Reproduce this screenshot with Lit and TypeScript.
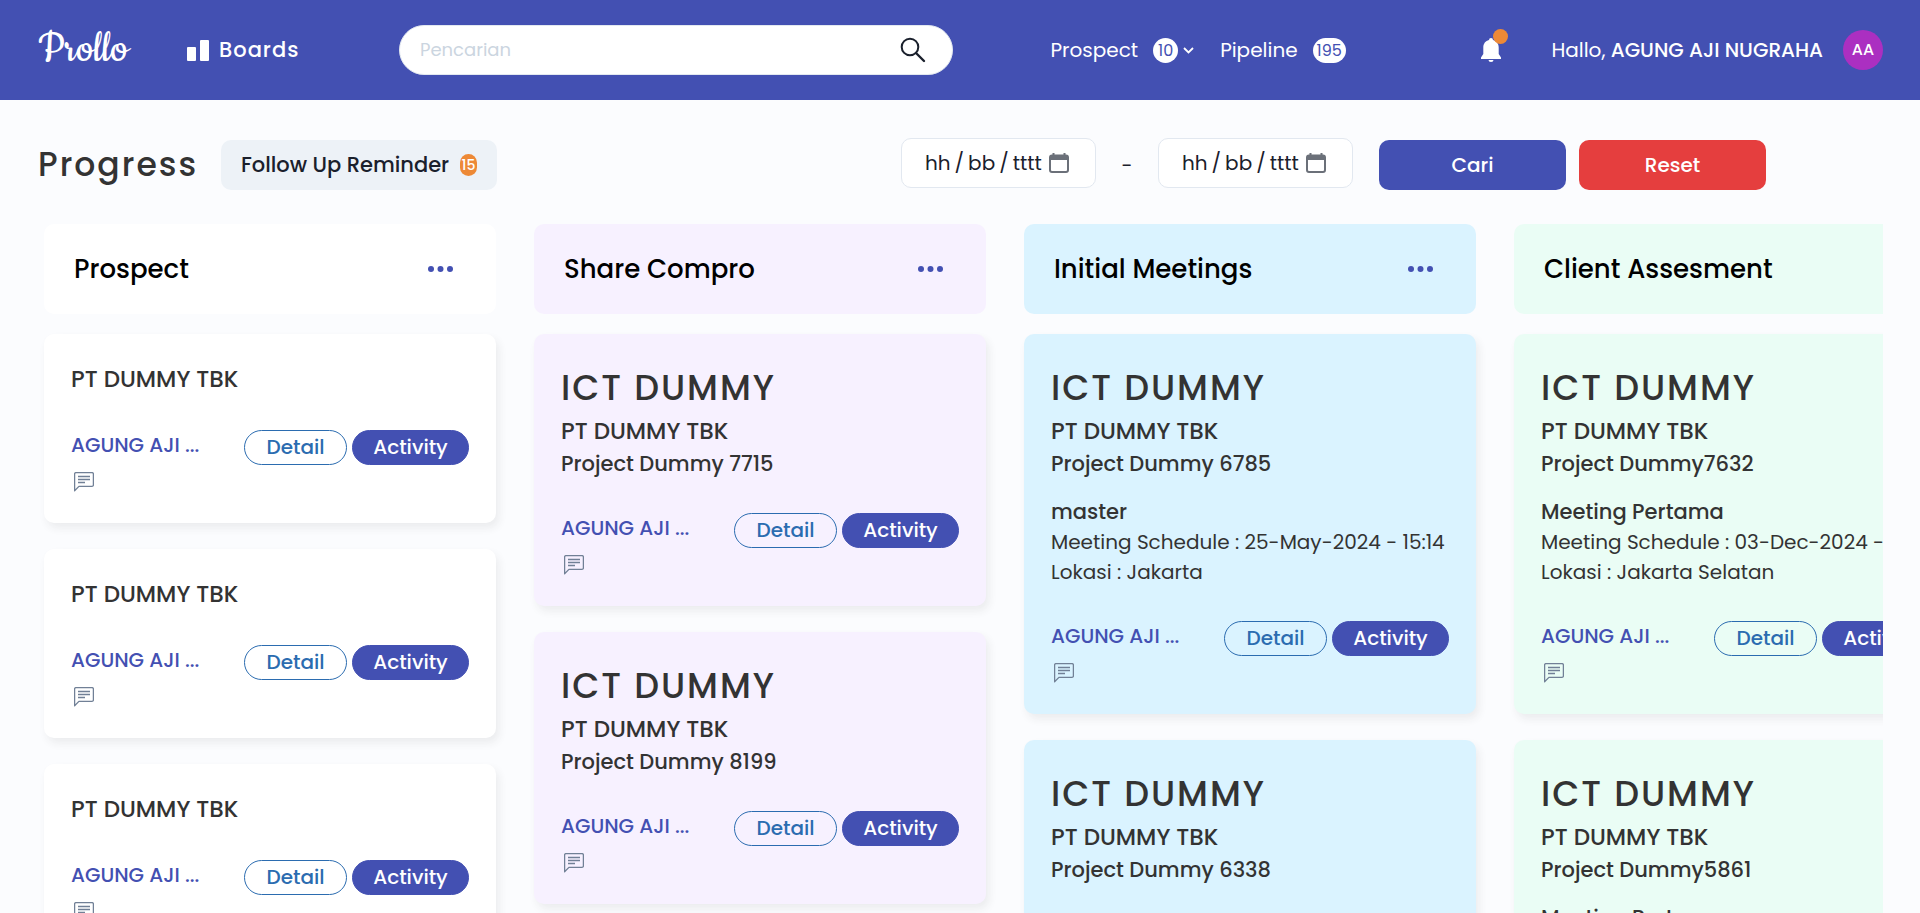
import { LitElement, html, svg, css, nothing } from "lit";
import { customElement, property } from "lit/decorators.js";

interface Meeting {
  title: string;
  schedule: string;
  location: string;
}

interface Deal {
  product?: string;
  company: string;
  project?: string;
  meeting?: Meeting;
  owner: string;
}

interface Stage {
  name: string;
  tone: string;
  deals: Deal[];
}

const owner = "AGUNG AJI ...";
const company = "PT DUMMY TBK";
const product = "ICT DUMMY";

const stages: Stage[] = [
  {
    name: "Prospect",
    tone: "white",
    deals: [
      { company, owner },
      { company, owner },
      { company, owner },
    ],
  },
  {
    name: "Share Compro",
    tone: "violet",
    deals: [
      { product, company, project: "Project Dummy 7715", owner },
      { product, company, project: "Project Dummy 8199", owner },
    ],
  },
  {
    name: "Initial Meetings",
    tone: "sky",
    deals: [
      {
        product,
        company,
        project: "Project Dummy 6785",
        meeting: { title: "master", schedule: "25-May-2024 - 15:14", location: "Jakarta" },
        owner,
      },
      { product, company, project: "Project Dummy 6338", owner },
    ],
  },
  {
    name: "Client Assesment",
    tone: "mint",
    deals: [
      {
        product,
        company,
        project: "Project Dummy7632",
        meeting: { title: "Meeting Pertama", schedule: "03-Dec-2024 -", location: "Jakarta Selatan" },
        owner,
      },
      {
        product,
        company,
        project: "Project Dummy5861",
        meeting: { title: "Meeting Pertama", schedule: "03-Dec-2024 -", location: "Jakarta Selatan" },
        owner,
      },
    ],
  },
];

const base = css`
  *,
  *::before,
  *::after {
    box-sizing: border-box;
  }
  h1,
  h2,
  h3,
  p {
    margin: 0;
    font-weight: 500;
  }
  button,
  input {
    margin: 0;
    padding: 0;
    border: 0;
    background: none;
    color: inherit;
    font: inherit;
  }
  button {
    cursor: pointer;
  }
  a {
    color: inherit;
    text-decoration: none;
  }
  svg {
    display: block;
    flex: none;
  }
`;

@customElement("app-header")
export class AppHeader extends LitElement {
  static styles = [
    base,
    css`
      :host {
        display: block;
        flex: none;
      }
      .bar {
        display: flex;
        align-items: center;
        height: 100px;
        padding: 0 37px 0 38px;
        background: #4350b2;
        color: #fff;
        font-size: 20px;
      }
      .start {
        display: flex;
        align-items: center;
        flex: 0 1 361px;
        gap: 57px;
      }
      .logo {
        width: 92px;
        font: 400 48px/52px Cookie, "Grand Hotel", Niconne, "Dancing Script", cursive;
      }
      .boards {
        display: flex;
        align-items: center;
        gap: 10px;
        font-size: 21px;
        font-weight: 500;
        letter-spacing: 1px;
      }
      .search {
        display: flex;
        align-items: center;
        flex: 0 1 30%;
        height: 50px;
        padding: 0 19px 0 20px;
        border: 1px solid #e2e8f0;
        border-radius: 25px;
        background: #fff;
        color: #1a202c;
      }
      .query {
        flex: 1;
        min-width: 0;
        font-size: 18px;
        outline: none;
      }
      .query::placeholder {
        color: #cbd5e0;
        opacity: 1;
      }
      .find {
        padding: 4px;
      }
      .links {
        display: flex;
        gap: 26px;
        margin-left: 98px;
      }
      .link {
        display: flex;
        align-items: center;
      }
      .count {
        min-width: 25px;
        height: 25px;
        margin-left: 15px;
        padding: 0 4px;
        border-radius: 13px;
        background: #fff;
        color: #4350b2;
        font-size: 16px;
        line-height: 25px;
        text-align: center;
      }
      .chevron {
        margin-left: 5px;
      }
      .account {
        display: flex;
        align-items: center;
        margin-left: auto;
      }
      .bell {
        position: relative;
        margin-right: 50px;
      }
      .dot {
        position: absolute;
        top: -9px;
        right: -7px;
        width: 15px;
        height: 15px;
        border-radius: 50%;
        background: #ed8936;
      }
      .name {
        font-weight: 500;
      }
      .avatar {
        width: 40px;
        height: 40px;
        margin-left: 20px;
        border-radius: 50%;
        background: #ab2fc1;
        font-size: 16px;
        font-weight: 500;
      }
    `,
  ];

  render() {
    return html`
      <header class="bar">
        <div class="start">
          <a class="logo" href="#">Prollo</a>
          <a class="boards" href="#boards">
            <svg width="22" height="21" viewBox="0 0 22 21" fill="currentColor" aria-hidden="true">
              <rect x="0" y="7" width="9" height="14" rx="1" />
              <rect x="13" y="0" width="9" height="21" rx="1" />
            </svg>
            Boards
          </a>
        </div>
        <form class="search" role="search">
          <input class="query" type="text" placeholder="Pencarian" aria-label="Pencarian" />
          <button class="find" type="button" aria-label="Cari">
            <svg width="32" height="32" viewBox="0 0 32 32" fill="none" stroke="currentColor" stroke-width="2" stroke-linecap="round" aria-hidden="true">
              <circle cx="13" cy="13" r="8.3" />
              <path d="M19 19l8 8" stroke-width="2.4" />
            </svg>
          </button>
        </form>
        <nav class="links">
          <a class="link" href="#prospect">
            Prospect<span class="count">10</span>
            <svg class="chevron" width="11" height="7" viewBox="0 0 11 7" fill="none" stroke="currentColor" stroke-width="1.8" aria-hidden="true">
              <path d="M1 1l4.5 4.5L10 1" />
            </svg>
          </a>
          <a class="link" href="#pipeline">Pipeline<span class="count">195</span></a>
        </nav>
        <div class="account">
          <button class="bell" type="button" aria-label="Notifikasi">
            <svg width="20" height="24" viewBox="0 0 20 24" fill="currentColor" aria-hidden="true">
              <path d="M10 0a2 2 0 0 0-2 2C4.500 2.900 2.300 5.600 2.300 9.500V16L0 19.500V21H20V19.500L17.700 16V9.500C17.700 5.600 15.500 2.900 12 2a2 2 0 0 0-2-2z" />
              <path d="M7.500 22h5a2.500 2 0 0 1-5 0z" />
            </svg>
            <span class="dot"></span>
          </button>
          <span>Hallo, <span class="name">AGUNG AJI NUGRAHA</span></span>
          <button class="avatar" type="button">AA</button>
        </div>
      </header>
    `;
  }
}

@customElement("filter-bar")
export class FilterBar extends LitElement {
  static styles = [
    base,
    css`
      :host {
        display: block;
        flex: none;
      }
      .row {
        display: flex;
        align-items: center;
        padding: 38px 154px 32px 38px;
        font-size: 20px;
      }
      .title {
        color: #333;
        font-size: 33px;
        line-height: 48px;
        letter-spacing: 2px;
      }
      .lead {
        display: flex;
        align-items: center;
        flex: 0 0 459px;
      }
      .reminder {
        display: flex;
        align-items: center;
        justify-content: space-between;
        width: 276px;
        height: 50px;
        margin-left: auto;
        padding: 0 20px;
        border-radius: 10px;
        background: #edf2f7;
        font-size: 21px;
        font-weight: 500;
      }
      .badge {
        width: 17px;
        height: 22px;
        border-radius: 9px;
        background: #ed8936;
        color: #fff;
        font-size: 14px;
        line-height: 22px;
        font-weight: 500;
        text-align: center;
      }
      .filters {
        display: flex;
        align-items: center;
        margin-left: auto;
      }
      .field {
        display: flex;
        align-items: center;
        width: 195px;
        height: 50px;
        margin-bottom: 4px;
        padding: 0 26px 0 23px;
        border: 1px solid #e2e8f0;
        border-radius: 10px;
        background: #fff;
      }
      .date {
        flex: 1;
        min-width: 0;
        outline: none;
      }
      .date::placeholder {
        color: #1a202c;
        opacity: 1;
      }
      .calendar {
        color: #6b7079;
      }
      .dash {
        width: 62px;
        text-align: center;
      }
      .action {
        width: 187px;
        height: 50px;
        margin-left: 13px;
        border-radius: 10px;
        color: #fff;
        font-weight: 500;
      }
      .apply {
        margin-left: 26px;
        background: #4350b2;
      }
      .reset {
        background: #e53e3e;
      }
    `,
  ];

  private dateField(label: string) {
    return html`
      <label class="field">
        <input class="date" type="text" placeholder="hh&#8201;/&#8201;bb&#8201;/&#8201;tttt" aria-label=${label} />
        <svg class="calendar" width="20" height="20" viewBox="0 0 20 20" aria-hidden="true">
          <rect x="1" y="2.500" width="18" height="16.500" rx="2" fill="none" stroke="currentColor" stroke-width="2" />
          <path fill="currentColor" d="M1 2h18v5H1zM3.500 0h2v3h-2zM14.500 0h2v3h-2z" />
        </svg>
      </label>
    `;
  }

  render() {
    return html`
      <div class="row">
        <div class="lead">
          <h1 class="title">Progress</h1>
          <button class="reminder" type="button">Follow Up Reminder<span class="badge">15</span></button>
        </div>
        <form class="filters">
          ${this.dateField("Tanggal awal")}
          <span class="dash">-</span>
          ${this.dateField("Tanggal akhir")}
          <button class="action apply" type="button">Cari</button>
          <button class="action reset" type="button">Reset</button>
        </form>
      </div>
    `;
  }
}

@customElement("deal-card")
export class DealCard extends LitElement {
  @property({ attribute: false }) deal!: Deal;

  static styles = [
    base,
    css`
      :host {
        display: block;
        padding: 28px 27px 31px 27px;
        border-radius: 10px;
        box-shadow: 3px 5px 8px rgba(51, 51, 51, 0.08);
        color: #333;
        font-size: 20px;
        line-height: 30px;
      }
      .product {
        font-size: 35px;
        line-height: 52px;
        letter-spacing: 2px;
      }
      .company {
        font-size: 23px;
        line-height: 34px;
      }
      .project {
        font-size: 21px;
        line-height: 31px;
      }
      .meeting {
        margin-top: 18px;
        white-space: nowrap;
      }
      .topic {
        font-size: 21px;
      }
      .detail-line {
        font-weight: 400;
      }
      .footer {
        display: flex;
        align-items: flex-start;
        gap: 5px;
        margin-top: 34px;
      }
      .owner {
        flex: 1;
        color: #4350b2;
        font-weight: 500;
      }
      .note {
        display: block;
        margin: 12px 0 0 3px;
        color: #718096;
      }
      .pill {
        width: 103px;
        height: 35px;
        border: 1px solid #2b6cb0;
        border-radius: 18px;
        color: #2b6cb0;
        font-weight: 500;
        line-height: 33px;
      }
      .solid {
        width: 117px;
        border-color: #4350b2;
        background: #4350b2;
        color: #fff;
      }
    `,
  ];

  render() {
    const { product, company, project, meeting, owner } = this.deal;
    return html`
      ${product ? html`<h3 class="product">${product}</h3>` : nothing}
      <p class="company">${company}</p>
      ${project ? html`<p class="project">${project}</p>` : nothing}
      ${meeting
        ? html`<div class="meeting">
            <p class="topic">${meeting.title}</p>
            <p class="detail-line">Meeting Schedule : ${meeting.schedule}</p>
            <p class="detail-line">Lokasi : ${meeting.location}</p>
          </div>`
        : nothing}
      <div class="footer">
        <div class="owner">
          ${owner}
          <button class="note" type="button" aria-label="Catatan">
            <svg width="20" height="20" viewBox="0 0 20 20" fill="none" stroke="currentColor" stroke-width="1.300" stroke-linejoin="round" aria-hidden="true">
              <path d="M.6 18.700V2A1.400 1.400 0 0 1 2 .6H18A1.400 1.400 0 0 1 19.400 2V13A1.400 1.400 0 0 1 18 14.400H4.900z" />
              <path d="M4 4.500H16M4 7.500H16M4 10.500H11" />
            </svg>
          </button>
        </div>
        <button class="pill" type="button">Detail</button>
        <button class="pill solid" type="button">Activity</button>
      </div>
    `;
  }
}

@customElement("stage-column")
export class StageColumn extends LitElement {
  @property({ attribute: false }) stage!: Stage;

  static styles = [
    base,
    css`
      :host {
        display: block;
        flex: 0 0 452px;
      }
      .head {
        display: flex;
        align-items: center;
        justify-content: space-between;
        height: 90px;
        margin-bottom: 20px;
        padding: 0 38px 0 30px;
        border-radius: 10px;
      }
      .name {
        color: #000;
        font-size: 26px;
      }
      .more {
        padding: 5px;
        color: #4350b2;
      }
      .cards {
        display: grid;
        gap: 26px;
      }
      .white {
        background: #fff;
      }
      .violet {
        background: #f7f1ff;
      }
      .sky {
        background: #daf3ff;
      }
      .mint {
        background: #eafdf5;
      }
    `,
  ];

  render() {
    const { name, tone, deals } = this.stage;
    const dots = [3, 12.5, 22].map((x) => svg`<circle cx=${x} cy="3" r="3" />`);
    return html`
      <div class="head ${tone}">
        <h2 class="name">${name}</h2>
        <button class="more" type="button" aria-label="Menu ${name}">
          <svg width="25" height="6" viewBox="0 0 25 6" fill="currentColor" aria-hidden="true">${dots}</svg>
        </button>
      </div>
      <div class="cards">
        ${deals.map((deal) => html`<deal-card class=${tone} .deal=${deal}></deal-card>`)}
      </div>
    `;
  }
}

@customElement("app-root")
export class AppRoot extends LitElement {
  static styles = [
    base,
    css`
      :host {
        display: flex;
        flex-direction: column;
        height: 100vh;
        overflow: hidden;
        background: #fbfcfe;
        color: #1a202c;
        font-family: Poppins, Inter, "Open Sans", sans-serif;
        font-size: 20px;
        line-height: 30px;
      }
      .board {
        display: flex;
        align-items: flex-start;
        flex: 1;
        gap: 38px;
        min-height: 0;
        margin: 0 37px 0 38px;
        padding-left: 6px;
        overflow: auto;
        scrollbar-width: none;
      }
    `,
  ];

  render() {
    return html`
      <app-header></app-header>
      <filter-bar></filter-bar>
      <main class="board">
        ${stages.map((stage) => html`<stage-column .stage=${stage}></stage-column>`)}
      </main>
    `;
  }
}
